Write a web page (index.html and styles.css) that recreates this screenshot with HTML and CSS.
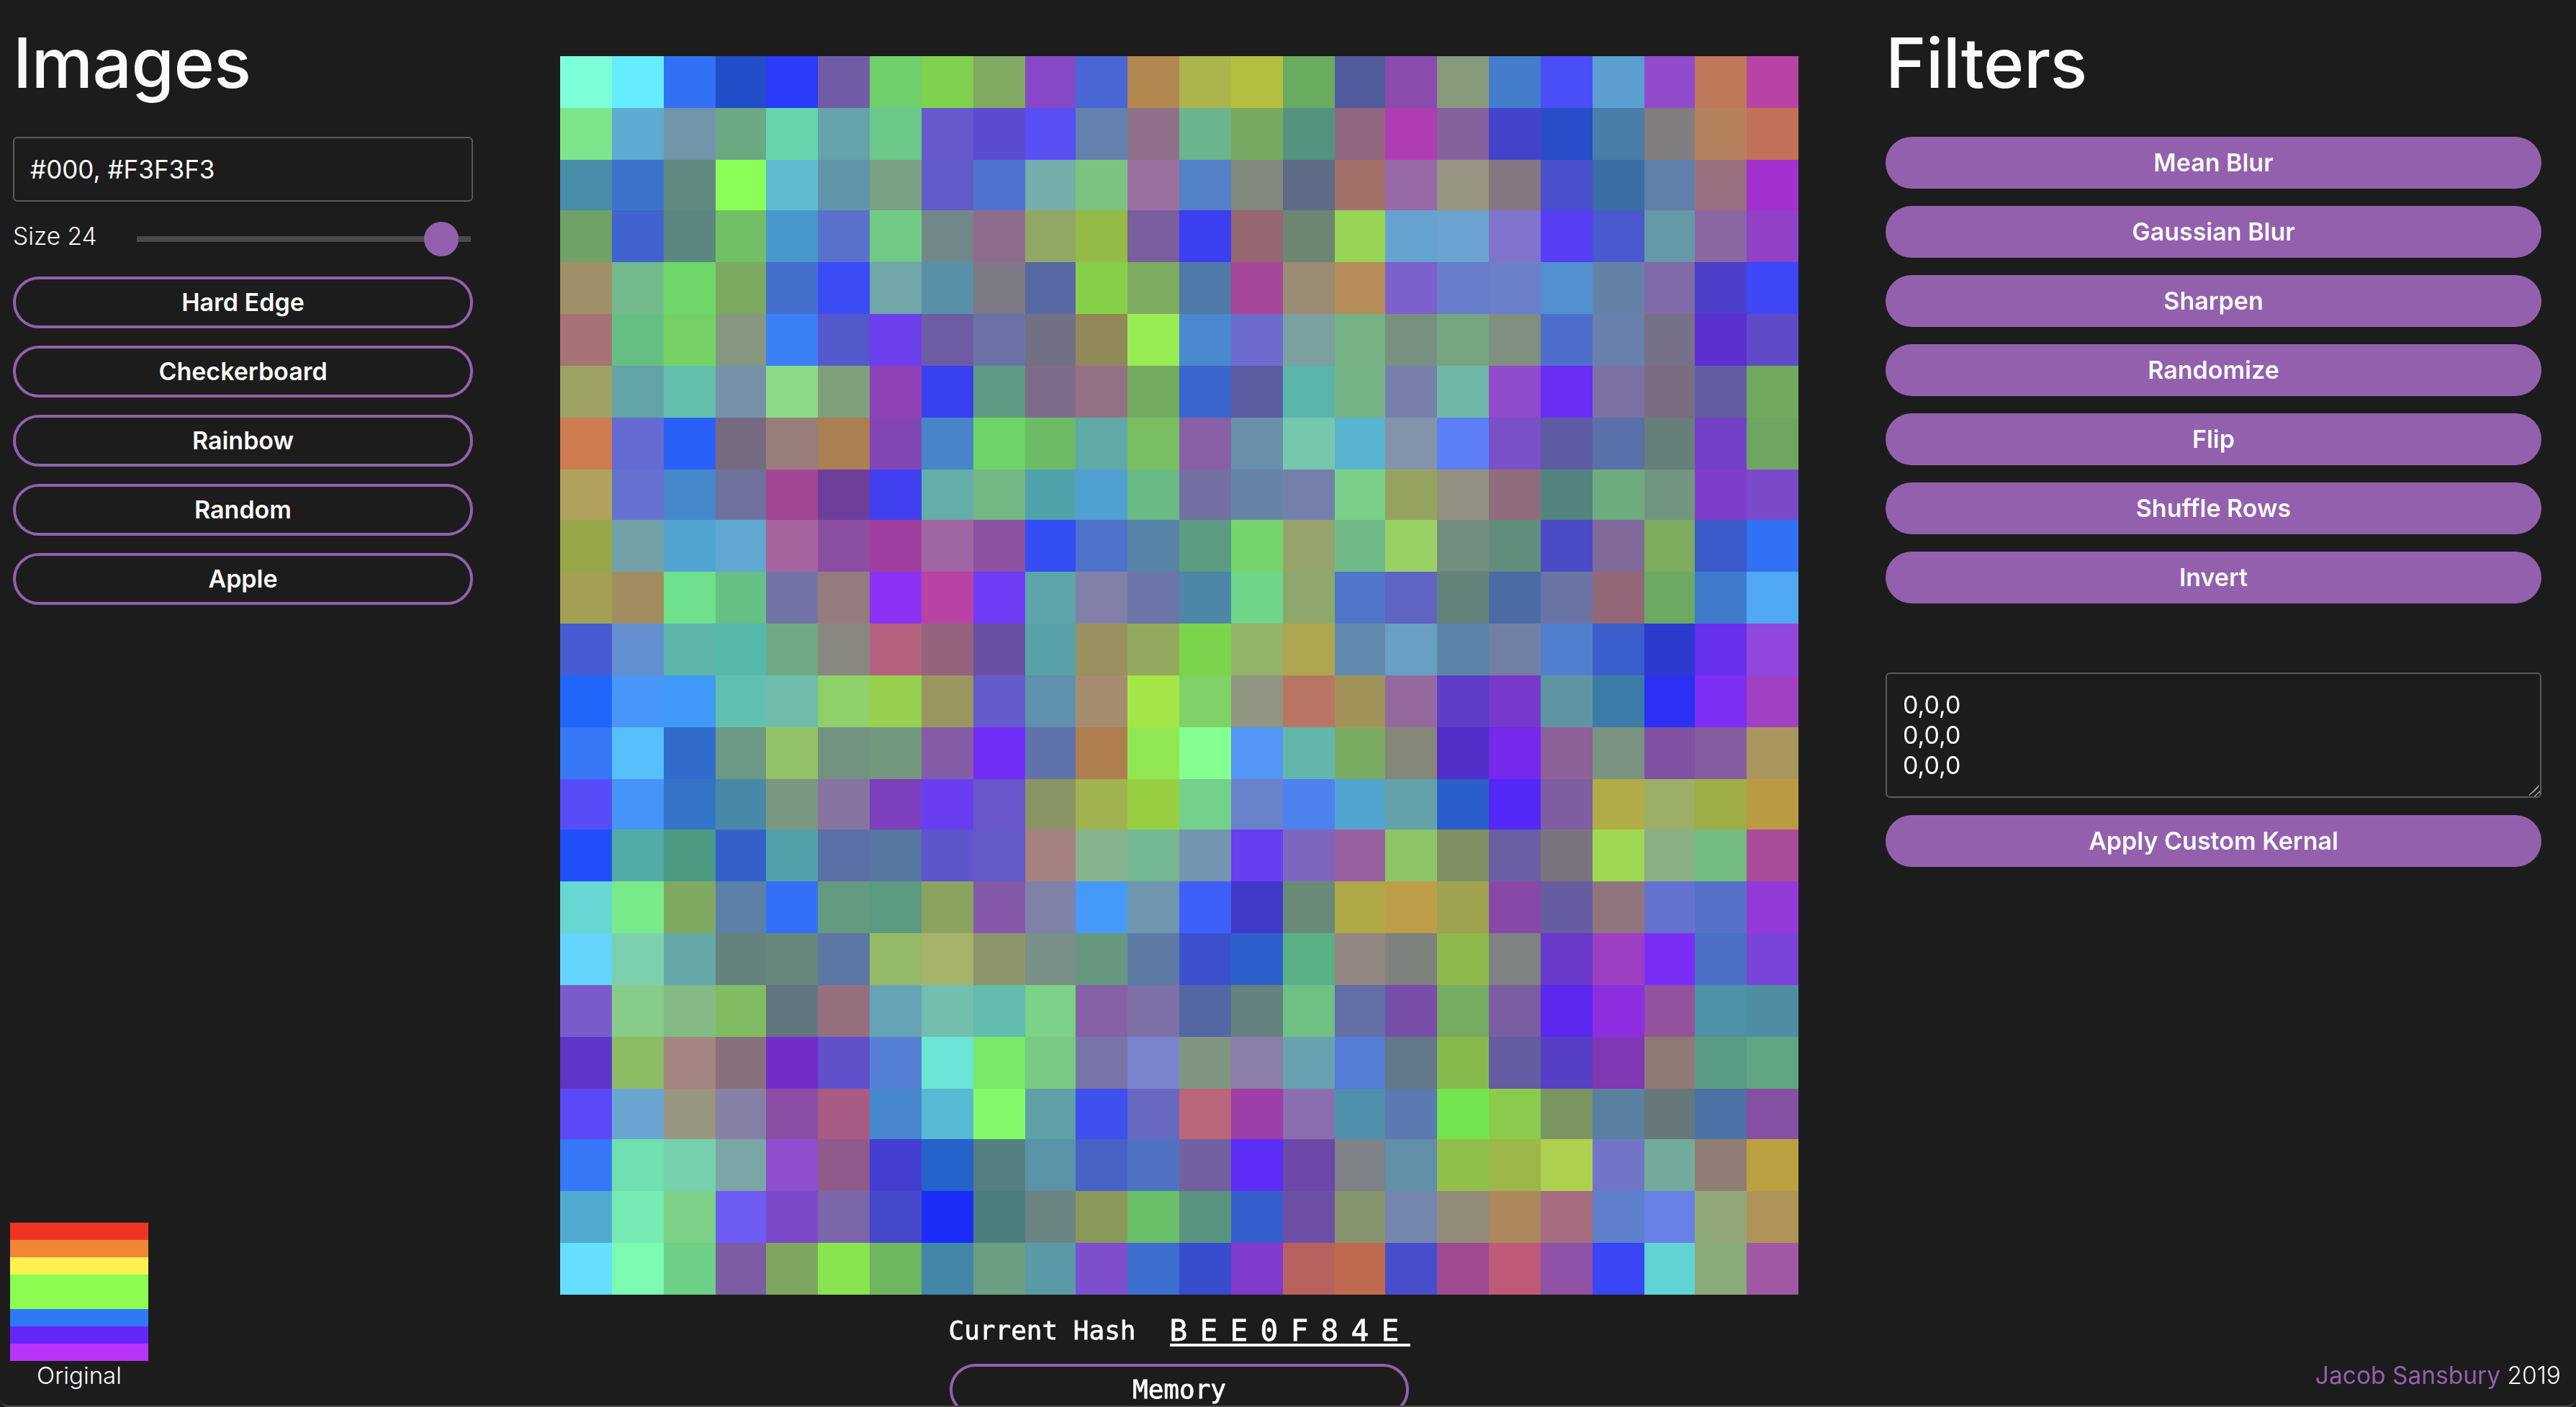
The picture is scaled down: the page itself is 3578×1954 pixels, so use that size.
FILE: index.html
```html
<!DOCTYPE html>
<html lang="en">
<head>
<meta charset="UTF-8">
<meta name="viewport" content="width=device-width, initial-scale=1.0">
<title>Image Kernels</title>
<link rel="stylesheet" href="styles.css">
</head>
<body>

<div class="page">
    <aside class="panel panel-left">
        <h1>Images</h1>
        <input class="field" type="text" value="#000, #F3F3F3">
        <div class="size-row">
            <label for="size">Size 24</label>
            <input id="size" class="slider" type="range" min="0" max="25" value="24">
        </div>
        <div class="stack">
            <button class="btn btn-outline">Hard Edge</button>
            <button class="btn btn-outline">Checkerboard</button>
            <button class="btn btn-outline">Rainbow</button>
            <button class="btn btn-outline">Random</button>
            <button class="btn btn-outline">Apple</button>
        </div>
        <div class="original">
            <div class="swatch">
                <span class="s-red"></span>
                <span class="s-orange"></span>
                <span class="s-yellow"></span>
                <span class="s-green"></span>
                <span class="s-blue"></span>
                <span class="s-indigo"></span>
                <span class="s-violet"></span>
            </div>
            <div class="original-label">Original</div>
        </div>
    </aside>

    <main class="center">
        <canvas id="board" width="1720" height="1720"></canvas>
        <div class="hash-row">
            <span class="hash-label">Current Hash</span>
            <span class="hash-value">BEE0F84E</span>
        </div>
        <button class="btn btn-outline btn-mono">Memory</button>
    </main>

    <aside class="panel panel-right">
        <h1>Filters</h1>
        <div class="stack">
            <button class="btn btn-fill">Mean Blur</button>
            <button class="btn btn-fill">Gaussian Blur</button>
            <button class="btn btn-fill">Sharpen</button>
            <button class="btn btn-fill">Randomize</button>
            <button class="btn btn-fill">Flip</button>
            <button class="btn btn-fill">Shuffle Rows</button>
            <button class="btn btn-fill">Invert</button>
        </div>
        <textarea class="kernel">0,0,0
0,0,0
0,0,0</textarea>
        <button class="btn btn-fill">Apply Custom Kernal</button>
        <footer class="credit"><span class="credit-name">Jacob Sansbury</span> 2019</footer>
    </aside>
</div>

<script src="script.js"></script>
</body>
</html>
```

FILE: styles.css
```css
* {
    box-sizing: border-box;
}
html, body {
    margin: 0;
    height: 100%;
    overflow: hidden;
}
body {
    background: #1c1c1c;
    color: #fafafa;
    font-family: Inter, "Noto Sans", sans-serif;
    font-size: 33.5px;
}
/* thin window edge along the bottom of the screenshot */
body::after {
    content: "";
    position: fixed;
    inset: 0;
    border-bottom: 2px solid #4a4a4a;
    border-radius: 0 0 12px 12px;
    pointer-events: none;
}
h1 {
    margin: 0 0 45px;
    font-size: 96px;
    font-weight: 500;
    line-height: 116px;
    letter-spacing: -0.5px;
}
.page {
    display: flex;
    height: 100%;
}
.panel {
    display: flex;
    flex-direction: column;
    padding-top: 29px;
    padding-bottom: 24px;
}
.panel-left {
    width: 778px;
    padding-left: 18px;
    padding-right: 121px;
}
.panel-right {
    width: 1080px;
    padding-left: 121px;
    padding-right: 48px;
}
.center {
    display: flex;
    flex-direction: column;
    align-items: center;
    width: 1720px;
    padding-top: 78px;
}

/* inputs */
.field {
    width: 100%;
    height: 90px;
    padding: 0 22px;
    background: transparent;
    border: 2px solid #5a5a5a;
    border-radius: 6px;
    color: #fafafa;
    font: 400 35px Inter, sans-serif;
}
.size-row {
    display: flex;
    align-items: center;
    justify-content: space-between;
    height: 48px;
    margin: 28px 0;
    font-weight: 300;
}
.size-row label {
    padding-bottom: 8px;
}
.slider {
    -webkit-appearance: none;
    appearance: none;
    width: 464px;
    height: 8px;
    margin: 0 3px 0 0;
    background: #4a4a4a;
    outline: none;
}
.slider::-webkit-slider-thumb {
    -webkit-appearance: none;
    width: 48px;
    height: 48px;
    border-radius: 50%;
    background: #9360ae;
}
.kernel {
    display: block;
    width: 100%;
    height: 174px;
    margin: 24px 0;
    padding: 22px 22px;
    background: transparent;
    border: 2px solid #5a5a5a;
    border-radius: 6px;
    color: #fafafa;
    font: 400 34px/42px Inter, sans-serif;
}
.kernel::-webkit-resizer {
    background: linear-gradient(135deg, transparent 42%, #9a9a9a 42% 50%, transparent 50% 72%, #9a9a9a 72% 80%, transparent 80%);
}

/* buttons */
.stack {
    display: flex;
    flex-direction: column;
    gap: 24px;
}
.panel-right .stack {
    margin-bottom: 72px;
}
.btn {
    flex: none;
    width: 100%;
    height: 72px;
    padding: 0 0 2px;
    border-radius: 36px;
    color: #fafafa;
    font: 600 34px Inter, sans-serif;
    cursor: pointer;
}
.btn-outline {
    background: transparent;
    border: 4px solid #9360ae;
}
.btn-fill {
    background: #9360ae;
    border: none;
}
.btn-mono {
    width: 638px;
    margin-top: 24px;
    font: 400 36px "DejaVu Sans Mono", monospace;
    -webkit-text-stroke: 0.8px #fafafa;
}

/* preview of the uploaded picture */
.original {
    margin-top: auto;
    margin-left: -4px;
    width: 192px;
    font-size: 33px;
    font-weight: 300;
    text-align: center;
}
.original-label {
    line-height: 40px;
}
.swatch {
    display: flex;
    flex-direction: column;
    height: 192px;
}
.swatch span {
    height: 24px;
}
.swatch .s-red { background: #ee3524; }
.swatch .s-orange { background: #f08636; }
.swatch .s-yellow { background: #fff14f; }
.swatch .s-green { height: 48px; background: #8bfd50; }
.swatch .s-blue { background: #2e79f6; }
.swatch .s-indigo { background: #6527f8; }
.swatch .s-violet { background: #ba33f9; }

/* hash under the board */
#board {
    display: block;
    width: 1720px;
    height: 1720px;
    flex: none;
}
.hash-row {
    display: flex;
    align-items: flex-end;
    gap: 47px;
    margin-top: 28px;
    font-family: "DejaVu Sans Mono", monospace;
    -webkit-text-stroke: 0.8px #fafafa;
}
.hash-label {
    font-size: 36px;
    line-height: 44px;
}
.hash-value {
    width: 334px;
    font-size: 41px;
    line-height: 36px;
    letter-spacing: 17.3px;
    white-space: nowrap;
    border-bottom: 4px solid #fafafa;
}

/* footer */
.credit {
    margin-top: auto;
    align-self: flex-end;
    margin-right: -27px;
    font-weight: 300;
    line-height: 39px;
}
.credit-name {
    color: #9360ae;
    font-weight: 400;
}
```

FILE: script.js
```js
// 24 x 24 board, colours per row
var rows = [
    "7dffda 66ecff 3172f5 224dc8 2a3bf9 705ca4 6fcf6b 7fd14e 82a962 8748c8 4866d4 b28750 acb44e b4bf3f 69ac5f 525b9d 8a4aae 859b7c 437dcc 4a4ef8 5b9fd0 914bcb c0785b b743a5",
    "7ee58b 5dabd0 7395aa 6aa982 68d4ab 66a2aa 6bc98a 6659cd 5a4ccd 584ff5 6581ad 907089 6bb58d 78a960 539380 916782 b03cb4 85619e 4344cb 2a4dc9 4a7da8 827e80 b3825c c27058",
    "468da9 3e73cc 5f897e 8bff57 5ebacf 6095a9 7aa082 615acb 5073d0 74ada9 7cc382 9a70a0 5480c8 80877c 5e6b86 a3716a 986aa5 989482 857880 4a4fcb 3a6ea5 5f80a8 9a6f80 a231ce",
    "6ea266 4163cd 5b8780 72c065 4898ce 5a71cb 70ca85 72878a 8f6c8c 91a766 93bb45 7b5e9e 3b3ff0 966771 6d8672 98d453 66a2cf 6ca2cf 8073cc 573ff5 4a59cd 6699a8 8a67a3 9140c8",
    "a09068 72ba8c 6ed768 7aa95f 446fcd 394cf6 71a5a8 5990a8 7d7a85 5868a3 85d048 7dab5f 4f79a8 a64699 9a8b74 b68c58 7c60cc 687ecb 6c7fcb 5090cf 6482a8 816aa8 4c40cb 3e47f6",
    "a67274 66bf82 74d265 85977f 3b80f7 5359cb 6c3fec 6e5ca2 6b72a5 717085 918957 98ec54 4a89cf 6b6ccd 7aa0a0 76b284 78907f 76a582 7f9080 4e6ecb 6880ab 767088 5c2fd0 5f4bc8",
    "9da264 62a4a8 63bfac 7590a9 8dd98a 80a07c 8e42b6 3741f2 5f9a85 7d6d8a 937286 72aa60 3a66ce 5c5ca3 5ab5aa 75b386 7680a8 6eb7a9 904ccb 6a2df6 7d71a3 7b6c83 635ea3 72a860",
    "cd7c50 656ad2 2860f8 766a80 987e7a aa7f54 8247b4 4785c8 6dd565 6cbb66 5fa9a7 7abe62 8860a5 6890aa 75c8ad 58b4d0 8393a9 5c7ff5 794fca 5e5ba5 5a70a8 667f7a 7440c8 6ea560",
    "b0a25c 6771d2 4488ca 6f719e a34696 6d3f9a 423ff0 63aea8 73b785 50a2aa 4fa0d0 69bb85 746fa5 6883a8 7480ab 7ad088 96a360 929080 8f6d7c 538480 6eab7f 729580 7e3ecb 7b4acb",
    "98a64a 72a1a8 50a4cf 60a8cf a5649d 8a4fa0 a03f9f a065a3 8e52a3 344ef5 4e73cb 5783a8 5b9b82 74d56c 96a46c 70ba88 98d064 728d80 628e7e 4a4bc5 7f6a99 7dac5e 3a5bc9 3171f3",
    "a2a052 a28d62 6fe08b 66bf85 7274a6 967b7e 8b32f5 b843a5 703bf5 5ca5a8 8280a8 6b75a8 4e86a8 70d588 8da76c 4f76c8 5e65c2 63837a 4b6ba5 6b75a5 936778 6baa60 3f7acc 50a8f2",
    "485bd3 628fd0 5cb5a8 55b8a8 6faa85 888880 b6627e 94637e 6950a3 56a2a8 9a9060 94a860 7bd44b 94b46a aea650 608aad 689fc3 5a83a8 7380a5 5080cd 3a5ecb 2c3acd 6630ee 9147de",
    "2166fb 4896f7 3f9af8 60c2ae 6ebdac 8ed168 96d04e 99965f 645bcc 5f90ac a68c6e a4e648 7fd268 8f9580 b87563 a09258 946a9e 5f3cc5 7739cb 6194a3 3b7ca8 2c30f5 7e2df5 a040c3",
    "3678f6 57bffa 306dcb 6c9985 93c366 739380 73987d 845ca6 712df5 6072aa ae7e50 92e852 84ff90 5496f8 62b7aa 7aab62 848677 542ec8 7628ec 8c6299 799380 8050a2 845da0 a9965e",
    "574df7 4694f8 3374c9 4a88a8 7c9780 8773a0 7c3fbd 683ef0 6a55cc 899664 a0b350 98ce42 73d18b 6882cc 4e81f0 52a4d0 64a2aa 2a5fca 5428f6 7e5ea0 b0ac47 9bb066 9fae46 bb9a44",
    "2050f7 53aba8 4b9a82 3560c8 52a0a8 5a70a6 5776a0 5d55cb 6459c9 a58280 88b390 74b892 7395b0 673ef0 7e66be 9a60a0 8ec565 7f8f64 6a5fa2 7b7480 9fd951 8cb086 74bb82 a94d9a",
    "66d7d2 79ea89 7fa960 5c80a8 3370f8 639a80 5b9980 8aa460 8558a8 7f82a8 459af8 7096b0 3f60f8 3f3ac8 6a8a78 aea946 bd9d4a 9fa24e 8848a8 655ca2 90757f 6672cf 5572c6 9239d8",
    "66d5fe 7bd1ae 66a7a8 64827e 68877c 5d77a5 94ba67 a5b46a 8f956a 7a8f88 66987f 5d7ba5 3d50cb 2d60cb 5ab185 928680 7d827e 8fb84c 7e8280 6838c8 9d3fc3 7a2ef5 4a6fc5 7b44d8",
    "7a5bcb 87cc89 84bb85 80bd62 637580 94707f 66a3b6 72bfb0 62bbae 7bd186 8661a5 7d70a6 5467a5 638280 6ec085 6270a6 774ea8 76ab62 7b5da2 5c28ef 8e2de0 93529e 4e92a8 4f8ea2",
    "5c36c8 8cbd64 a4847e 87707c 742cc8 6050ca 5580d6 6ae5d6 7ae96a 78c982 7874a8 7b83cc 809580 8a7fa8 68a2b0 547dd6 637888 86b94c 645da2 563fc4 8038b4 8f7a76 5a9b84 60a682",
    "5b48f7 6ba4d0 989680 8780a5 8b4ca3 a85c84 4787cd 58b9d2 83fa6a 60a0a8 3e50ee 6768c0 bb667a 9e3ea8 8a6eb0 4f90ac 5b7aaf 74e44f 8acb4c 7a9560 5a80a2 66787a 4a72a5 8650a2",
    "3678f8 6fe0b0 76d0ac 7aa6a6 8f4dd0 915a8c 433dd0 2462cc 558080 5a92a8 4663c6 4f72c2 7260a2 5c2ef5 6c49a8 7e8286 6290a8 90c04a 9cb84a add04f 7075c8 74aa9c 907e74 bba040",
    "50aad0 75eab2 7bd186 6e5df2 7b48ca 7b66aa 4548c8 1a2cf8 4b7d7d 6b8582 8b9a5c 69be68 589480 345fcc 6e4fa6 86946e 7486ae 948c7a ad885e a66c80 5e80cc 6680e6 90a878 b09358",
    "66deff 7cfab2 6dd086 7c5da4 7fa460 88e54f 6fb660 4286a8 699f80 5a9aa6 7d4fce 3c6fcf 374dcd 803acc b86260 bf6a50 484dcc a04a92 bd5a78 8f52a6 3a45f5 60d4d4 8aaa7a a058a4"
];

var board = document.getElementById('board');
var ctx = board.getContext('2d');

// cell edges land on even pixels
function edgeX(i) {
    return 2 * Math.round(i * 860 / 24);
}
function edgeY(j) {
    return 2 * Math.ceil(j * 860 / 24 - 0.5);
}

rows.forEach(function (row, j) {
    row.split(' ').forEach(function (color, i) {
        ctx.fillStyle = '#' + color;
        ctx.fillRect(edgeX(i), edgeY(j), edgeX(i + 1) - edgeX(i), edgeY(j + 1) - edgeY(j));
    });
});
```
